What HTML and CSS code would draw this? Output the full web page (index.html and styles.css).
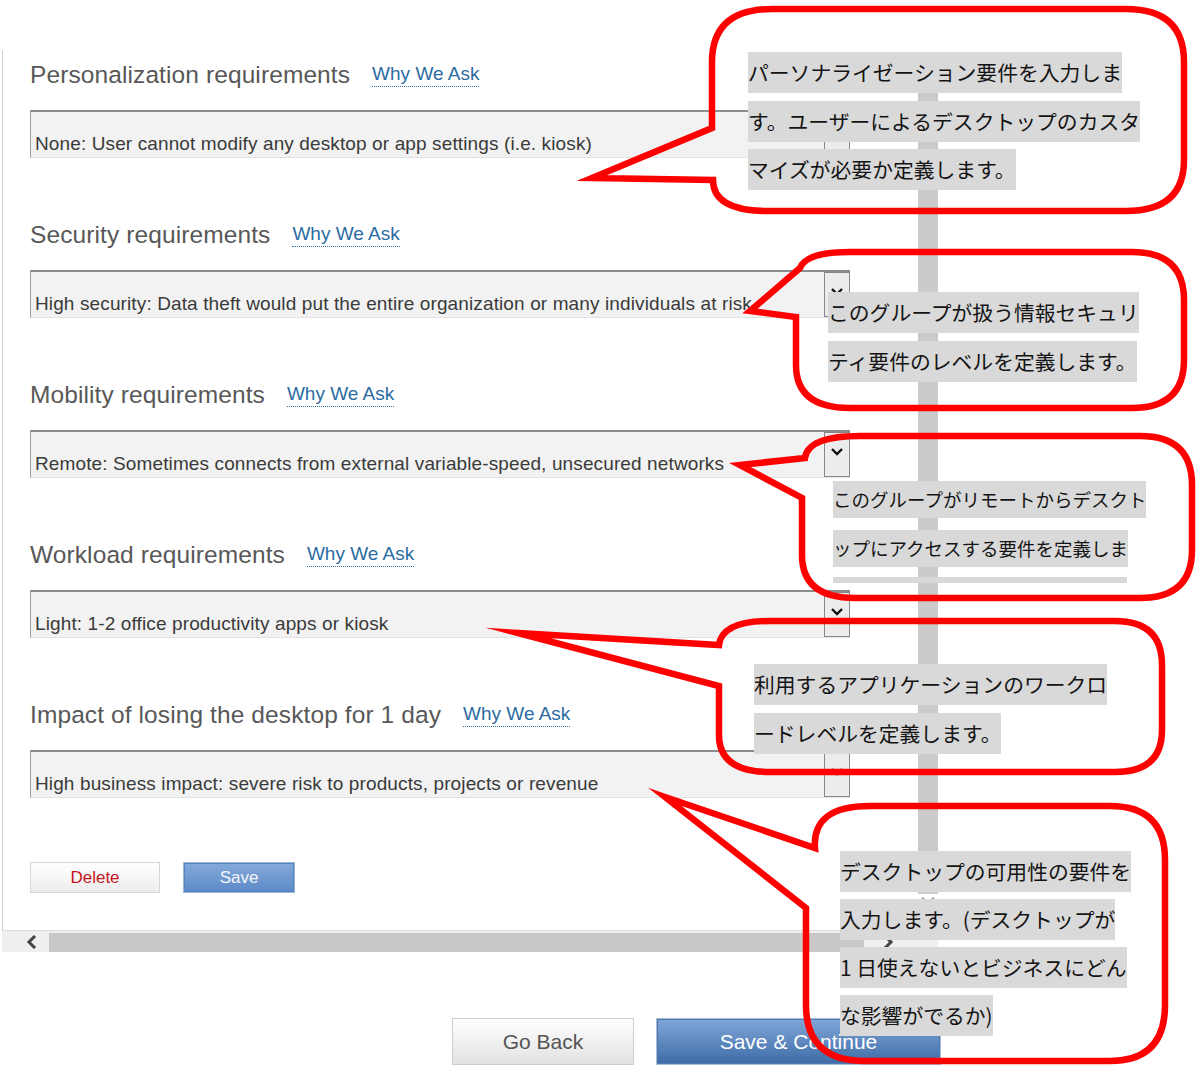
FILE: index.html
```html
<!DOCTYPE html>
<html lang="ja">
<head>
  <meta charset="UTF-8" />
  <meta name="viewport" content="width=device-width, initial-scale=1.0" />
  <title>デスクトップ要件</title>
  <link rel="stylesheet" href="styles.css">
</head>
<body>
  <div class="page">
    <div class="panel">
      <div class="form">
        <div class="field">
          <div class="field-head"><span class="field-label">Personalization requirements</span><a class="why" href="#">Why We Ask</a></div>
          <div class="select"><span class="select-text">None: User cannot modify any desktop or app settings (i.e. kiosk)</span><span class="select-btn"><svg width="14" height="10" viewBox="0 0 14 10"><path d="M2 2 L7 7 L12 2" /></svg></span></div>
        </div>
        <div class="field">
          <div class="field-head"><span class="field-label">Security requirements</span><a class="why" href="#">Why We Ask</a></div>
          <div class="select"><span class="select-text">High security: Data theft would put the entire organization or many individuals at risk</span><span class="select-btn"><svg width="14" height="10" viewBox="0 0 14 10"><path d="M2 2 L7 7 L12 2" /></svg></span></div>
        </div>
        <div class="field">
          <div class="field-head"><span class="field-label">Mobility requirements</span><a class="why" href="#">Why We Ask</a></div>
          <div class="select"><span class="select-text">Remote: Sometimes connects from external variable-speed, unsecured networks</span><span class="select-btn"><svg width="14" height="10" viewBox="0 0 14 10"><path d="M2 2 L7 7 L12 2" /></svg></span></div>
        </div>
        <div class="field">
          <div class="field-head"><span class="field-label">Workload requirements</span><a class="why" href="#">Why We Ask</a></div>
          <div class="select"><span class="select-text">Light: 1-2 office productivity apps or kiosk</span><span class="select-btn"><svg width="14" height="10" viewBox="0 0 14 10"><path d="M2 2 L7 7 L12 2" /></svg></span></div>
        </div>
        <div class="field">
          <div class="field-head"><span class="field-label">Impact of losing the desktop for 1 day</span><a class="why" href="#">Why We Ask</a></div>
          <div class="select"><span class="select-text">High business impact: severe risk to products, projects or revenue</span><span class="select-btn"><svg width="14" height="10" viewBox="0 0 14 10"><path d="M2 2 L7 7 L12 2" /></svg></span></div>
        </div>
        <div class="actions">
          <button class="btn-delete">Delete</button>
          <button class="btn-save">Save</button>
        </div>
      </div>
      <div class="vbar">
        <div class="vthumb"></div>
        <svg class="vbar-arrow" width="20" height="16" viewBox="0 0 20 16"><path d="M4 4 L10 10 L16 4" /></svg>
      </div>
    </div>
    <div class="hscroll">
      <svg class="hs-left" width="12" height="14" viewBox="0 0 12 14"><path d="M9 1 L3 7 L9 13" /></svg>
      <div class="hthumb"></div>
      <svg class="hs-right" width="12" height="14" viewBox="0 0 12 14"><path d="M3 1 L9 7 L3 13" /></svg>
    </div>
    <div class="footer">
      <button class="btn-back">Go Back</button>
      <button class="btn-continue">Save &amp; Continue</button>
    </div>
  </div>

  <!-- annotation callouts -->
  <svg class="callouts" width="1200" height="1072" viewBox="0 0 1200 1072">
    <path d="M712,128 L712,62 Q712,9 772,9 L1126,9 Q1184,9 1184,62 L1184,160 Q1184,211 1126,211 L768,211 Q713,211 713,180 L592,178 Z" />
    <path d="M750,311 L800,268 Q806,252 850,252 L1132,252 Q1184,252 1184,300 L1184,360 Q1184,408 1132,408 L850,408 Q796,408 796,365 L796,317 Z" />
    <path d="M740,465 L805,458 Q808,436 860,436 L1140,436 Q1192,436 1192,485 L1192,550 Q1192,598 1140,598 L855,598 Q802,598 802,555 L802,498 Z" />
    <path d="M518,633 L719,645 Q722,621 770,621 L1115,621 Q1162,621 1162,665 L1162,730 Q1162,772 1115,772 L770,772 Q719,772 719,735 L719,686 Z" />
    <path d="M665,797 L815,848 Q812,806 870,806 L1110,806 Q1165,806 1165,860 L1165,1005 Q1165,1061 1110,1061 L865,1061 Q806,1061 806,1005 L806,908 Z" />
  </svg>

  <div class="note note-1">
    <span>パーソナライゼーション要件を入力しま</span>
    <span>す。ユーザーによるデスクトップのカスタ</span>
    <span>マイズが必要か定義します。</span>
  </div>
  <div class="note note-2">
    <span>このグループが扱う情報セキュリ</span>
    <span>ティ要件のレベルを定義します。</span>
  </div>
  <div class="note note-3">
    <span>このグループがリモートからデスクト</span>
    <span>ップにアクセスする要件を定義しま</span>
    <i class="note-bar"></i>
  </div>
  <div class="note note-4">
    <span>利用するアプリケーションのワークロ</span>
    <span>ードレベルを定義します。</span>
  </div>
  <div class="note note-5">
    <span>デスクトップの可用性の要件を</span>
    <span>入力します。(デスクトップが</span>
    <span>1 日使えないとビジネスにどん</span>
    <span>な影響がでるか)</span>
  </div>
</body>
</html>
```

FILE: styles.css
```css
body { margin: 0; background: #fff; font-family: "Liberation Sans", Arial, sans-serif; position: relative; width: 1200px; height: 1072px; overflow: hidden; }
button { font-family: inherit; cursor: pointer; padding: 0; }

.page { padding-top: 50px; }
.panel { margin-left: 2px; width: 935px; height: 880px; border-left: 1px solid #cfcfcf; display: grid; grid-template-columns: 915px 20px; }
.form { padding: 2px 0 0 27px; }

.field { margin-bottom: 54px; }
.field-head { height: 46px; display: flex; align-items: center; gap: 22px; }
.field-label { font-size: 24.5px; letter-spacing: 0.1px; color: #585858; }
.why { font-size: 19px; color: #2b6ca3; text-decoration: none; border-bottom: 1px dotted #2b6ca3; padding-bottom: 1px; }

.select { margin-top: 12px; width: 820px; height: 48px; box-sizing: border-box; display: flex; align-items: flex-end; background: #f2f2f2; border-top: 2px solid #8c8c8c; border-left: 1px solid #a0a0a0; border-bottom: 1px solid #e2e2e2; }
.select-text { flex: 1; padding: 0 0 2px 4px; font-size: 19px; letter-spacing: 0.12px; line-height: 22px; color: #3a3a3a; white-space: nowrap; overflow: hidden; }
.select-btn { align-self: stretch; width: 26px; box-sizing: border-box; border: 1px solid #888; background: #ececec; display: flex; justify-content: center; padding-top: 14px; }
.select-btn path { fill: none; stroke: #111; stroke-width: 2.4; }

.actions { display: flex; gap: 23px; margin-top: 10px; padding-top: 10px; }
.btn-delete { width: 130px; height: 31px; border: 1px solid #d6d6d6; background: linear-gradient(#fff, #ececec); color: #c4161c; font-size: 17px; }
.btn-save { width: 112px; height: 31px; border: 1px solid #9db6d6; box-shadow: inset 0 0 0 1px #5383c0; background: linear-gradient(#86aadb, #5b89c6); color: #f4f7fb; font-size: 17px; }

.vbar { display: flex; flex-direction: column; padding: 2px 0 20px; }
.vthumb { flex: 1; background: #cbcbcb; }
.vbar-arrow path { fill: none; stroke: #999; stroke-width: 2.5; }

.hscroll { margin-left: 2px; width: 936px; height: 21px; background: #efefef; border-top: 1px solid #dcdcdc; display: flex; align-items: center; }
.hs-left { margin-left: 24px; }
.hs-left path, .hs-right path { fill: none; stroke: #444; stroke-width: 3; }
.hthumb { margin-left: 11px; width: 815px; align-self: stretch; margin-top: 2px; background: #c8c8c8; }
.hs-right { margin-left: 18px; }

.footer { display: flex; gap: 22px; padding-left: 452px; margin-top: 66px; }
.btn-back { width: 182px; height: 47px; border: 1px solid #cfcfcf; background: linear-gradient(#fff, #e2e2e2); color: #555; font-size: 21px; }
.btn-continue { width: 285px; height: 47px; border: 1px solid #a9bcd4; box-shadow: inset 0 0 0 1px #4d7ab3; background: linear-gradient(#80a6d8, #3e6ca7); color: #fff; font-size: 21px; }

.callouts { position: absolute; top: 0; left: 0; pointer-events: none; }
.callouts path { fill: none; stroke: #ff0000; stroke-width: 6.5; stroke-linejoin: miter; stroke-miterlimit: 20; }

.note { position: absolute; display: flex; flex-direction: column; align-items: flex-start; gap: 7.5px; font-family: "Noto Sans CJK JP", sans-serif; font-size: 20.8px; color: #141414; }
.note span { background: #d9d9d9; height: 41px; line-height: 41px; white-space: nowrap; }
.note-1 { left: 748px; top: 52px; }
.note-2 { left: 828px; top: 292px; }
.note-3 { left: 833px; top: 481px; font-size: 18.5px; gap: 12px; }
.note-3 span { height: 37px; line-height: 37px; }
.note-bar { display: block; width: 294px; height: 6px; background: #d9d9d9; margin-top: -2px; }
.note-4 { left: 754px; top: 664px; }
.note-5 { left: 840px; top: 851px; gap: 7px; }
```
